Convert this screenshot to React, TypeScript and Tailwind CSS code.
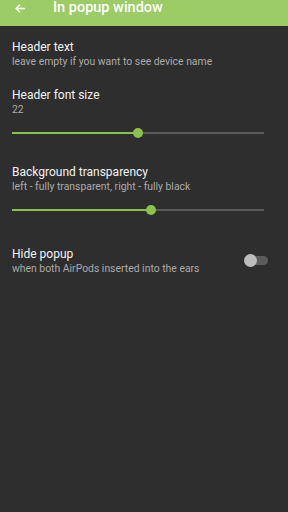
import React from "react";

function Slider({ pct }: { pct: number }) {
  return (
    <div className="relative ml-3 mr-[24px] h-[10px]">
      <div className="absolute left-0 right-0 top-[4px] h-[2px] bg-[#5a5a5a]" />
      <div className="absolute left-0 top-[4px] h-[2px] bg-[#8bc34a]" style={{ width: `${pct}%` }} />
      <div
        className="absolute top-0 h-[10px] w-[10px] -translate-x-1/2 rounded-full bg-[#8bc34a]"
        style={{ left: `${pct}%` }}
      />
    </div>
  );
}

export default function App() {
  return (
    <div
      className="w-[288px] h-[512px] bg-[#2e2e2e] text-white overflow-hidden"
      style={{ fontFamily: "Roboto, 'Noto Sans', sans-serif" }}
    >
      <div className="h-[26px] bg-[#9ccc65] flex items-start">
        <svg className="ml-[14px] mt-[2px]" width="13" height="13" viewBox="0 0 24 24" fill="none" stroke="#ffffff" strokeWidth="2.6">
          <path d="M20 12H5M11 5l-7 7 7 7" />
        </svg>
        <div className="ml-[26px] mt-0 text-[14.5px] leading-[15px] font-medium text-white">In popup window</div>
      </div>

      <div className="px-3 pt-[13px]">
        <div className="text-[12px] leading-[16px] text-[#f2f2f2]">Header text</div>
        <div className="text-[10.4px] leading-[13px] text-[#ababab]">leave empty if you want to see device name</div>
      </div>

      <div className="px-3 pt-[19px]">
        <div className="text-[12px] leading-[16px] text-[#f2f2f2]">Header font size</div>
        <div className="text-[10.4px] leading-[13px] text-[#ababab]">22</div>
      </div>
      <div className="mt-[12px]">
        <Slider pct={50} />
      </div>

      <div className="px-3 pt-[26px]">
        <div className="text-[12px] leading-[16px] text-[#f2f2f2]">Background transparency</div>
        <div className="text-[10.4px] leading-[13px] text-[#ababab]">left - fully transparent, right - fully black</div>
      </div>
      <div className="mt-[12px]">
        <Slider pct={55} />
      </div>

      <div className="pl-3 pr-[20px] pt-[31px] flex items-center justify-between">
        <div>
          <div className="text-[12px] leading-[16px] text-[#f2f2f2]">Hide popup</div>
          <div className="text-[10.4px] leading-[13px] text-[#ababab]">when both AirPods inserted into the ears</div>
        </div>
        <div className="relative w-[24px] h-[13px] -mt-[1px]">
          <div className="absolute left-[2px] right-0 top-[2px] h-[9px] rounded-full bg-[#5c5c5c]" />
          <div className="absolute left-0 top-0 h-[13px] w-[13px] rounded-full bg-[#bdbdbd]" />
        </div>
      </div>
    </div>
  );
}
